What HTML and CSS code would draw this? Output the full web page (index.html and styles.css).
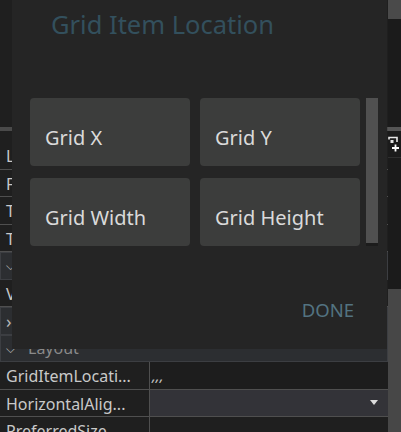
FILE: index.html
```html
<!DOCTYPE html>
<html>
<head>
<meta charset="utf-8">
<link rel="stylesheet" href="styles.css">
</head>
<body>
<div class="screen">
  <div class="grid">
    <div class="top"></div>
    <div class="hdr"></div>
    <div class="partial"></div>
    <div class="row"><div class="name">LineBreakMode</div><div class="val"></div></div>
    <div class="row"><div class="name">FontFamily</div><div class="val"></div></div>
    <div class="row"><div class="name">Text</div><div class="val"></div></div>
    <div class="row"><div class="name">TextColor</div><div class="val"></div></div>
    <div class="row cat"><span class="chev">&#x2335;</span><span class="cat-label">Visual</span></div>
    <div class="row"><div class="name">Visible</div><div class="val"></div></div>
    <div class="row cat"><span class="chev chev-r">&#x203A;</span><span class="cat-label">Behavior</span></div>
    <div class="row cat"><span class="chev">&#x2335;</span><span class="cat-label">Layout</span></div>
    <div class="row"><div class="name">GridItemLocati...</div><div class="val val-dark"><span class="commas">,,,</span></div></div>
    <div class="row"><div class="name">HorizontalAlig...</div><div class="val val-drop"><svg class="drop" width="8" height="5" viewBox="0 0 8 5"><path d="M0 0H8L4 5Z" fill="#dcdcdc"/></svg></div></div>
    <div class="row"><div class="name">PreferredSize</div><div class="val"></div></div>
  </div>
  <div class="rail">
    <div class="rail-thumb-top"></div>
    <div class="rail-track"></div>
    <div class="rail-hdr"></div>
    <div class="rail-icon">
      <svg width="13" height="24" viewBox="0 0 13 24"><path d="M1 8.5V6.5H9V11" fill="none" stroke="#e6e6e6" stroke-width="1.6"/><rect x="2.5" y="9" width="3" height="3" fill="#e6e6e6"/><path d="M4 17H11M7.5 13.5V20.5" stroke="#ffffff" stroke-width="1.8"/></svg>
    </div>
    <div class="rail-track2"></div>
    <div class="rail-thumb-bottom"></div>
  </div>
  <div class="dialog">
    <h1 class="title">Grid Item Location</h1>
    <div class="scroller">
      <div class="cards">
        <div class="card">Grid X</div>
        <div class="card">Grid Y</div>
        <div class="card">Grid Width</div>
        <div class="card">Grid Height</div>
      </div>
      <div class="sbar"></div>
    </div>
    <div class="actions"><span class="done">DONE</span></div>
  </div>
</div>
</body>
</html>
```
FILE: styles.css
```css
html, body {
  margin: 0;
  padding: 0;
  background: #1e1e1e;
}
body {
  font-family: "Noto Sans", "Open Sans", sans-serif;
}
.screen {
  position: relative;
  width: 401px;
  height: 432px;
  overflow: hidden;
  display: flex;
}
.grid {
  width: 388px;
  flex: none;
  display: flex;
  flex-direction: column;
  background: #1f1f1f;
}
.top {
  height: 127px;
  flex: none;
}
.hdr {
  height: 4px;
  flex: none;
  background: #4a4a4a;
}
.partial {
  height: 11px;
  flex: none;
}
.row {
  height: 27.5px;
  flex: none;
  display: flex;
  box-sizing: border-box;
  border-bottom: 1px solid #4f4f4f;
}
.name {
  width: 150px;
  flex: none;
  box-sizing: border-box;
  border-right: 1px solid #4f4f4f;
  padding-left: 6px;
  font-size: 16px;
  line-height: 28px;
  color: #c9c9c9;
  white-space: nowrap;
  overflow: hidden;
}
.val {
  flex: 1;
  display: flex;
  align-items: center;
}
.val-dark {
  background: #1d1d1d;
}
.commas {
  padding-left: 2px;
  font-size: 15px;
  font-style: italic;
  color: #c0c0c0;
  line-height: 28px;
}
.val-drop {
  background: #333338;
  justify-content: flex-end;
  padding-right: 10px;
}
.cat {
  background: #2c2e31;
  border: 1px solid #3c3e42;
  align-items: center;
  color: #8a8a8a;
  font-size: 16px;
}
.chev {
  width: 22px;
  padding-left: 5px;
  font-size: 12px;
  color: #b8b8b8;
}
.chev-r {
  font-size: 18px;
}
.cat-label {
  line-height: 26px;
}
.rail {
  width: 13px;
  flex: none;
  display: flex;
  flex-direction: column;
}
.rail-thumb-top {
  height: 19px;
  background: #4a4a4a;
}
.rail-track {
  height: 108px;
  background: #1b1b1b;
}
.rail-hdr {
  height: 4px;
  background: #555555;
}
.rail-icon {
  height: 27px;
  background: #1b1b1b;
  border-bottom: 1px solid #2e2e2e;
  box-sizing: border-box;
}
.rail-icon svg {
  display: block;
}
.rail-track2 {
  height: 131px;
  background: #1b1b1b;
}
.rail-thumb-bottom {
  flex: 1;
  background: #474747;
}
.dialog {
  position: absolute;
  left: 12px;
  top: 0;
  width: 375px;
  height: 349px;
  background: #252525;
  display: flex;
  flex-direction: column;
}
.title {
  margin: 0;
  padding: 8px 0 0 39px;
  font-size: 25.5px;
  line-height: 32px;
  font-weight: 400;
  color: #33505d;
}
.scroller {
  margin: 58px 0 0 18px;
  height: 148px;
  display: flex;
  gap: 6px;
}
.cards {
  display: grid;
  grid-template-columns: 160px 160px;
  grid-auto-rows: 68px;
  column-gap: 10px;
  row-gap: 12px;
}
.card {
  background: #3c3d3c;
  border-radius: 4px;
  box-sizing: border-box;
  padding: 30px 0 0 15px;
  font-size: 20px;
  line-height: 20px;
  color: #dadada;
}
.sbar {
  width: 12px;
  height: 145px;
  background: #505050;
  border-bottom: 3px solid #1c1c1c;
}
.actions {
  margin-top: 54px;
  display: flex;
  justify-content: flex-end;
  padding-right: 33px;
}
.done {
  font-size: 18.5px;
  line-height: 20px;
  color: #537381;
}
```
